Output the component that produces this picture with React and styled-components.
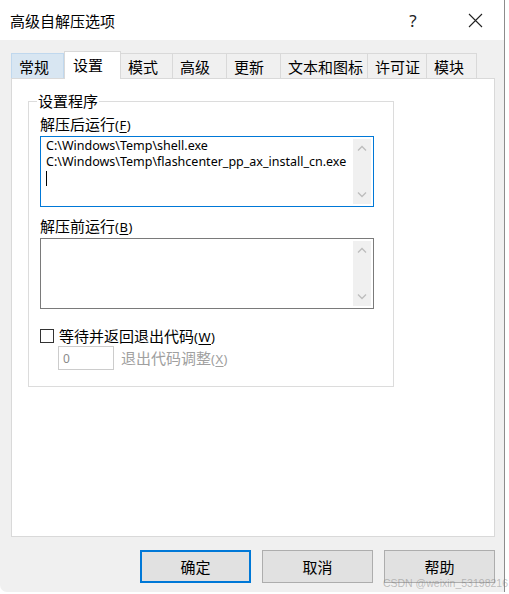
import React from "react";
import styled, { createGlobalStyle } from "styled-components";

const GlobalStyle = createGlobalStyle`
  body {
    margin: 0;
    background: #ffffff;
    font-family: "Noto Sans", "Noto Sans CJK SC", sans-serif;
  }
`;

const Window = styled.div`
  position: relative;
  width: 504px;
  height: 592px;
  background-color: #f0f0f0;
  border-right: 1px solid #8c8c8c;
  border-bottom-left-radius: 7px;
  display: flex;
  flex-direction: column;
  overflow: visible;
  color: #000000;
`;

const TitleBar = styled.div`
  height: 40px;
  background-color: #ffffff;
  display: flex;
  align-items: center;
  padding-left: 10px;
  padding-right: 4px;
  font-size: 15px;
`;

const Title = styled.span`
  flex: 1;
`;

const CaptionButton = styled.div`
  width: ${(p) => p.$w}px;
  height: 40px;
  margin-left: ${(p) => p.$gap || 0}px;
  display: flex;
  align-items: center;
  justify-content: center;
  font-size: 17px;
  color: #222;
`;

const TabStrip = styled.div`
  position: relative;
  z-index: 1;
  display: flex;
  align-items: flex-end;
  height: 28px;
  margin: 11px 0 0 11px;
`;

const Tab = styled.div`
  box-sizing: border-box;
  width: ${(p) => p.$w}px;
  height: ${(p) => (p.$active ? 28 : 25)}px;
  margin-bottom: ${(p) => (p.$active ? 0 : 1)}px;
  padding-left: ${(p) => (p.$active ? 8 : 7)}px;
  padding-bottom: ${(p) => (p.$active ? 2 : 0)}px;
  display: flex;
  align-items: center;
  font-size: 15px;
  background-color: ${(p) =>
    p.$active ? "#ffffff" : p.$hover ? "#d8e6f2" : "#f0f0f0"};
  border: 1px solid ${(p) => (p.$hover ? "#c0d8ee" : "#d9d9d9")};
  border-bottom: none;
  border-left: ${(p) => (p.$first || p.$active ? "" : "none")};
  white-space: nowrap;
`;

const Panel = styled.div`
  box-sizing: border-box;
  height: 459px;
  margin: -1px 9px 0 11px;
  background-color: #ffffff;
  border: 1px solid #d9d9d9;
  padding: 12px 0 0 16px;
`;

const Group = styled.fieldset`
  box-sizing: border-box;
  width: 366px;
  margin: 0;
  padding: 3px 0 16px 11px;
  border: 1px solid #dcdcdc;
  display: flex;
  flex-direction: column;
`;

const Legend = styled.legend`
  font-size: 15px;
  padding: 0 1px;
  margin-left: -3px;
  line-height: 20px;
`;

const Label = styled.div`
  font-size: 15px;
  line-height: 20px;
  height: 20px;
  margin-top: ${(p) => p.$top || 0}px;
  color: ${(p) => (p.$disabled ? "#a0a0a0" : "#000")};
`;

const Hotkey = styled.span`
  font-size: 13px;
  letter-spacing: 0.5px;
  u {
    text-decoration-thickness: 1px;
    text-underline-offset: 2px;
  }
`;

const TextBox = styled.div`
  box-sizing: border-box;
  width: 334px;
  height: 71px;
  margin-top: 2px;
  border: 1px solid ${(p) => (p.$focused ? "#0078d7" : "#7a7a7a")};
  background-color: #ffffff;
  display: flex;
`;

const Lines = styled.div`
  flex: 1;
  padding: 1px 0 0 5px;
  font-size: 12.5px;
  line-height: 16px;
  white-space: pre;
`;

const Caret = styled.div`
  width: 1px;
  height: 15px;
  background-color: #000;
  margin-top: 1px;
`;

const ScrollBar = styled.div`
  width: 18px;
  margin: 2px 2px 2px 0;
  background-color: #f0f0f0;
  display: flex;
  flex-direction: column;
  justify-content: space-between;
  align-items: center;
  padding: 6px 0;
`;

const Row = styled.div`
  display: flex;
  align-items: center;
  gap: ${(p) => p.$gap || 0}px;
  margin-top: ${(p) => p.$top || 0}px;
  margin-left: ${(p) => p.$left || 0}px;
`;

const CheckBox = styled.div`
  box-sizing: border-box;
  width: 14px;
  height: 14px;
  border: 1px solid #333333;
  background: #ffffff;
`;

const NumberBox = styled.div`
  box-sizing: border-box;
  width: 56px;
  height: 24px;
  border: 1px solid #cccccc;
  background-color: #ffffff;
  color: #8a8a8a;
  font-size: 12px;
  padding-left: 4px;
  display: flex;
  align-items: center;
`;

const ButtonRow = styled.div`
  display: flex;
  justify-content: flex-end;
  gap: 11px;
  margin: 13px 9px 0 0;
`;

const Button = styled.div`
  box-sizing: border-box;
  width: 111px;
  height: 33px;
  display: flex;
  align-items: center;
  justify-content: center;
  font-size: 15px;
  background-color: #e1e1e1;
  border: ${(p) => (p.$default ? "2px solid #0078d7" : "1px solid #adadad")};
`;

const Watermark = styled.div`
  position: absolute;
  right: -4px;
  bottom: 3px;
  font-size: 10.5px;
  color: rgba(120, 120, 120, 0.45);
  font-family: "Liberation Sans", sans-serif;
  white-space: nowrap;
`;

const tabs = [
  { name: "常规", w: 53, hover: true },
  { name: "设置", w: 57, active: true },
  { name: "模式", w: 52 },
  { name: "高级", w: 54 },
  { name: "更新", w: 54 },
  { name: "文本和图标", w: 87 },
  { name: "许可证", w: 59 },
  { name: "模块", w: 50 },
];

const Chevron = ({ up }) => (
  <svg width="10" height="6" viewBox="0 0 10 6">
    <path
      d={up ? "M1 5.5 L5 1.5 L9 5.5" : "M1 0.5 L5 4.5 L9 0.5"}
      fill="none"
      stroke="#bdbdbd"
      strokeWidth="1.3"
    />
  </svg>
);

const Scroll = () => (
  <ScrollBar>
    <Chevron up />
    <Chevron />
  </ScrollBar>
);

const App = () => (
  <>
    <GlobalStyle />
    <Window>
      <TitleBar>
        <Title>高级自解压选项</Title>
        <CaptionButton $w={30}>?</CaptionButton>
        <CaptionButton $w={50} $gap={22}>
          <svg width="15" height="15" viewBox="0 0 15 15">
            <path d="M1 1 L14 14 M14 1 L1 14" stroke="#222" strokeWidth="1.1" />
          </svg>
        </CaptionButton>
      </TitleBar>

      <TabStrip>
        {tabs.map((t, i) => (
          <Tab
            key={t.name}
            $w={t.w}
            $active={t.active}
            $hover={t.hover}
            $first={i === 0}
          >
            {t.name}
          </Tab>
        ))}
      </TabStrip>

      <Panel>
        <Group>
          <Legend>设置程序</Legend>
          <Label>
            解压后运行
            <Hotkey>
              (<u>F</u>)
            </Hotkey>
          </Label>
          <TextBox $focused>
            <Lines>
              {"C:\\Windows\\Temp\\shell.exe\nC:\\Windows\\Temp\\flashcenter_pp_ax_install_cn.exe"}
              <Caret />
            </Lines>
            <Scroll />
          </TextBox>
          <Label $top={9}>
            解压前运行
            <Hotkey>
              (<u>B</u>)
            </Hotkey>
          </Label>
          <TextBox>
            <Lines />
            <Scroll />
          </TextBox>
          <Row $top={17} $gap={5}>
            <CheckBox />
            <Label>
              等待并返回退出代码
              <Hotkey>
                (<u>W</u>)
              </Hotkey>
            </Label>
          </Row>
          <Row $top={0} $left={18} $gap={7}>
            <NumberBox>0</NumberBox>
            <Label $disabled>
              退出代码调整
              <Hotkey>
                (<u>X</u>)
              </Hotkey>
            </Label>
          </Row>
        </Group>
      </Panel>

      <ButtonRow>
        <Button $default>确定</Button>
        <Button>取消</Button>
        <Button>帮助</Button>
      </ButtonRow>
      <Watermark>CSDN @weixin_53198216</Watermark>
    </Window>
  </>
);

export default App;
